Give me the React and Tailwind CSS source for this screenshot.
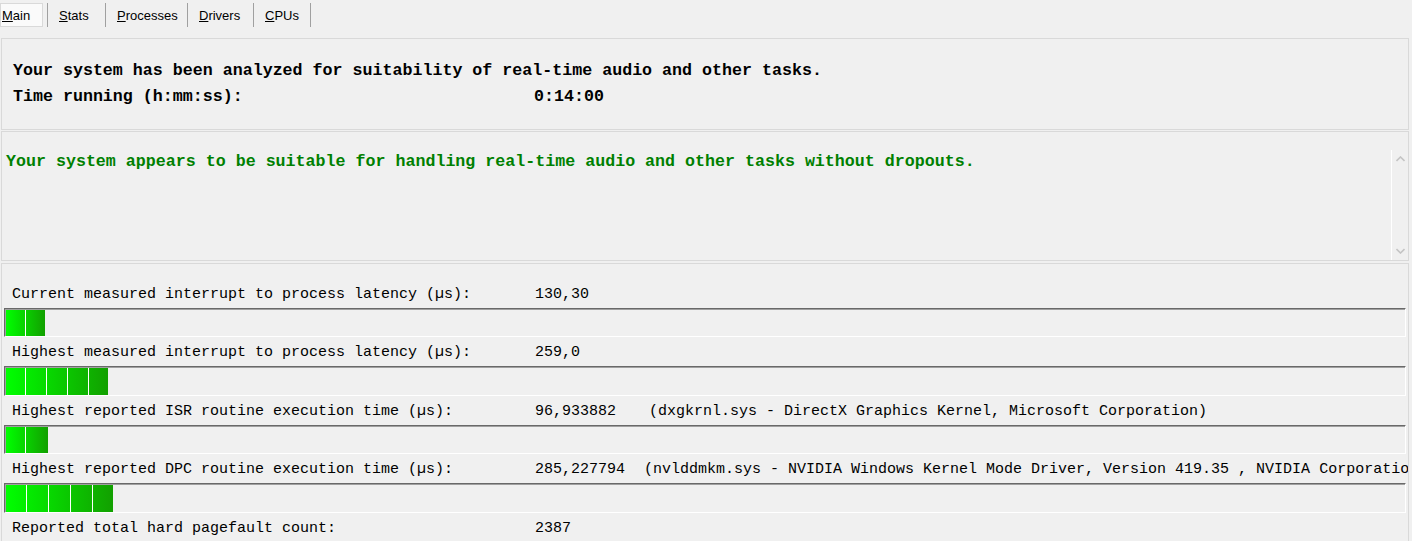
import React from 'react';

const tabs = [
  { key: 'S', rest: 'tats', w: 'w-[57px]' },
  { key: 'P', rest: 'rocesses', w: 'w-[81px]' },
  { key: 'D', rest: 'rivers', w: 'w-[65px]' },
  { key: 'C', rest: 'PUs', w: 'w-[56px]' },
];

// chunk widths of each latency bar, in px
const rows = [
  {
    label: 'Current measured interrupt to process latency (µs):',
    value: '130,30',
    chunks: [19, 20],
  },
  {
    label: 'Highest measured interrupt to process latency (µs):',
    value: '259,0',
    chunks: [19, 21, 21, 21, 20],
  },
  {
    label: 'Highest reported ISR routine execution time (µs):',
    value: '96,933882',
    detail: '(dxgkrnl.sys - DirectX Graphics Kernel, Microsoft Corporation)',
    detailGap: 'ml-[33px]',
    chunks: [19, 23],
  },
  {
    label: 'Highest reported DPC routine execution time (µs):',
    value: '285,227794',
    detail:
      '(nvlddmkm.sys - NVIDIA Windows Kernel Mode Driver, Version 419.35 , NVIDIA Corporation)',
    detailGap: 'ml-[19px]',
    chunks: [20, 22, 22, 22, 21],
  },
  {
    label: 'Reported total hard pagefault count:',
    value: '2387',
  },
];

function Chevron({ up }) {
  return (
    <svg width="9" height="6" viewBox="0 0 9 6" className="block">
      <polyline
        points={up ? '0.5,5 4.5,1 8.5,5' : '0.5,1 4.5,5 8.5,1'}
        fill="none"
        stroke="#c4c4c4"
        strokeWidth="1.6"
      />
    </svg>
  );
}

function Bar({ chunks }) {
  return (
    <div className="mx-[2px] h-[29.5px] border-t border-l border-[#696969] border-b border-r border-b-white border-r-white shadow-[inset_1px_1px_0_#a0a0a0] pl-[1px] pt-[1px]">
      {chunks && (
        <div className="flex h-full w-fit bg-[linear-gradient(to_right,#00ff00,#12a000)]">
          {chunks.map((w, i) => (
            <div
              key={i}
              className={i === 0 ? 'h-full' : 'h-full border-l border-white'}
              style={{ width: w }}
            />
          ))}
        </div>
      )}
    </div>
  );
}

export default function App() {
  return (
    <div className="h-[541px] w-full overflow-hidden bg-[#f0f0f0] text-black">
      {/* tab strip */}
      <div className="flex h-[28px] items-start pt-[3px] font-['Liberation_Sans',Arial,sans-serif] text-[13px]">
        <div className="flex h-[24px] w-[43px] items-center border border-[#d9d9d9] bg-[#fafafa] pl-[1px] pt-[2px]">
          <span>
            <span className="underline">M</span>ain
          </span>
        </div>
        <div className="ml-[4px] h-[24px] w-px bg-[#a0a0a0]" />
        {tabs.map((t) => (
          <React.Fragment key={t.key}>
            <div className={`flex h-[24px] items-center pl-[11px] pt-[2px] ${t.w}`}>
              <span>
                <span className="underline">{t.key}</span>
                {t.rest}
              </span>
            </div>
            <div className="h-[24px] w-px bg-[#a0a0a0]" />
          </React.Fragment>
        ))}
      </div>

      <div className="font-['Liberation_Mono','Courier_New',monospace]">
        {/* summary */}
        <div className="mx-[1px] mt-[10px] h-[92px] w-[1408px] border border-[#d9d9d9] pl-[11px] pt-[19px] text-[16.65px] font-bold leading-[26px] whitespace-pre">
          <div>Your system has been analyzed for suitability of real-time audio and other tasks.</div>
          <div className="flex">
            <span className="w-[521px]">Time running (h:mm:ss):</span>
            <span>0:14:00</span>
          </div>
        </div>

        {/* verdict */}
        <div className="mx-[1px] mt-px flex h-[130px] w-[1408px] border border-[#d9d9d9]">
          <div className="flex-1 pl-[4px] pt-[17px] text-[16.65px] font-bold leading-[26px] text-[#008000] whitespace-pre">
            Your system appears to be suitable for handling real-time audio and other tasks without dropouts.
          </div>
          <div className="mt-[18px] flex w-[17px] flex-col items-center justify-between border-l border-white pb-[6px] pt-[6px]">
            <Chevron up />
            <Chevron />
          </div>
        </div>

        {/* measurements */}
        <div className="mx-[1px] mt-[2px] h-[300px] w-[1408px] overflow-hidden border border-[#d9d9d9] pt-[14.5px] text-[15px]">
          {rows.map((r) => (
            <div key={r.label}>
              <div className="flex h-[29px] items-center overflow-hidden whitespace-pre pl-[10px] pt-[4px]">
                <span className="w-[523px] shrink-0">{r.label}</span>
                <span>{r.value}</span>
                {r.detail && <span className={r.detailGap}>{r.detail}</span>}
              </div>
              {r.chunks && <Bar chunks={r.chunks} />}
            </div>
          ))}
        </div>
      </div>
    </div>
  );
}
